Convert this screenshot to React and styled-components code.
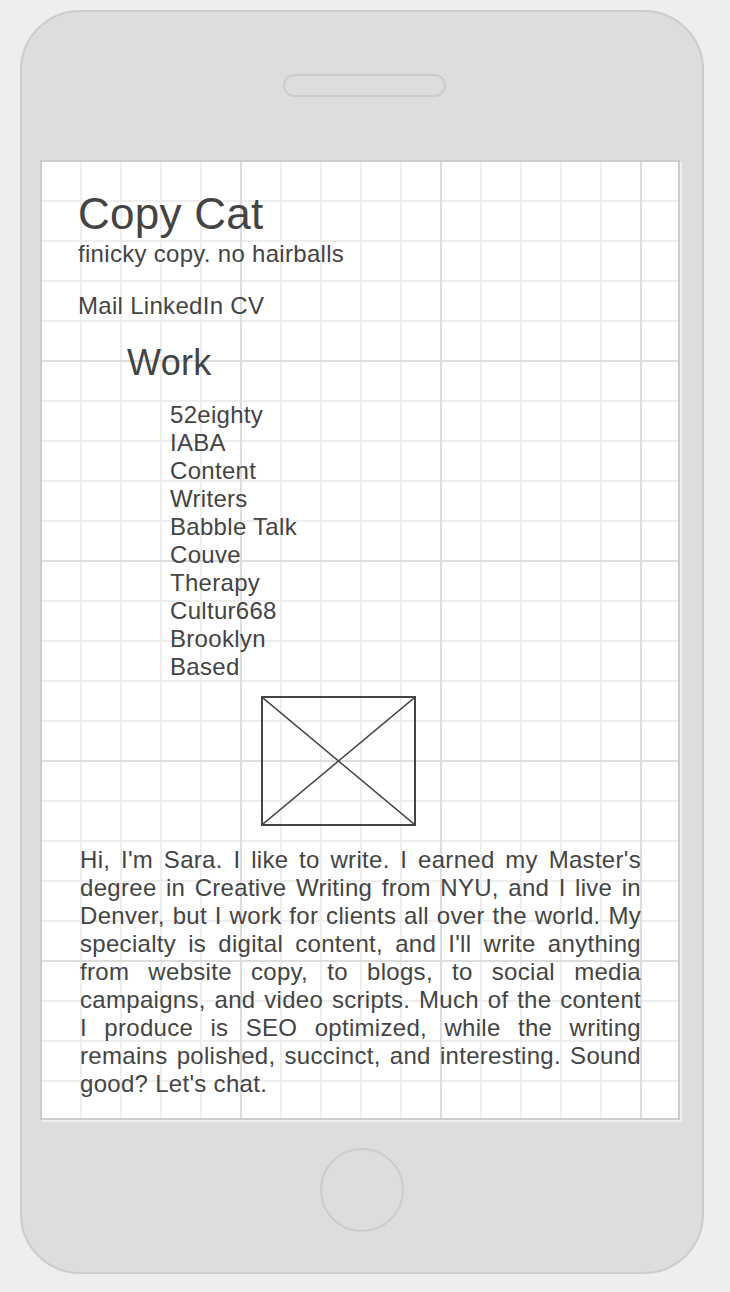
import React from 'react';
import styled, { createGlobalStyle } from 'styled-components';

const Global = createGlobalStyle`
  html, body { margin: 0; padding: 0; background: #eeeeee; }
  body { font-family: "Liberation Sans", Arial, Helvetica, sans-serif; color: #444444; }
`;

const Page = styled.div`
  width: 730px;
  height: 1292px;
  box-sizing: border-box;
  padding: 10px 0 0 20px;
`;

const Phone = styled.div`
  width: 684px;
  height: 1264px;
  box-sizing: border-box;
  border: 2px solid #cccccc;
  border-radius: 60px;
  background: #dddddd;
  display: flex;
  flex-direction: column;
  align-items: flex-start;
  padding: 62px 0 0 18px;
`;

const Speaker = styled.div`
  width: 163px;
  height: 23px;
  box-sizing: border-box;
  border: 2px solid #cccccc;
  border-radius: 12px;
  margin: 0 0 63px 243px;
`;

const Screen = styled.div`
  width: 640px;
  height: 960px;
  box-sizing: border-box;
  border: 2px solid #cccccc;
  background-color: #ffffff;
  background-image:
    linear-gradient(to right, #dddddd 2px, transparent 2px),
    linear-gradient(to bottom, #dddddd 2px, transparent 2px),
    linear-gradient(to right, #eeeeee 2px, transparent 2px),
    linear-gradient(to bottom, #eeeeee 2px, transparent 2px);
  background-size: 200px 200px, 200px 200px, 40px 40px, 40px 40px;
  background-origin: border-box;
  box-shadow: 2px 2px 0 #efefef;
  padding: 25px 36px 0 36px;
  display: flex;
  flex-direction: column;
  align-items: flex-start;
  letter-spacing: 0.3px;
`;

const Title = styled.h1`
  margin: 0;
  font-size: 44px;
  line-height: 53px;
  font-weight: 400;
  letter-spacing: 0.25px;
`;

const Tagline = styled.div`
  font-size: 24px;
  line-height: 28px;
`;

const Links = styled.nav`
  margin-top: 24px;
  font-size: 24px;
  line-height: 28px;
  display: flex;
`;

const LinkItem = styled.a`
  color: inherit;
  text-decoration: none;
  white-space: pre;
`;

const SectionTitle = styled.h2`
  margin: 23px 0 0 49px;
  font-size: 36px;
  line-height: 40px;
  font-weight: 400;
`;

const WorkList = styled.ul`
  margin: 18px 0 0 92px;
  padding: 0;
  list-style: none;
  width: 140px;
`;

const WorkItem = styled.li`
  font-size: 24px;
  line-height: 28px;
`;

const ImageBox = styled.div`
  margin: 15px 0 0 183px;
  width: 155px;
  height: 130px;
  box-sizing: border-box;
  border: 2px solid #444444;
  display: flex;
  svg { display: block; width: 100%; height: 100%; }
`;

const Bio = styled.p`
  margin: 20px 1px 0 2px;
  align-self: stretch;
  font-size: 24px;
  line-height: 28px;
  text-align: justify;
`;

const HomeButton = styled.div`
  width: 84px;
  height: 84px;
  box-sizing: border-box;
  border: 2px solid #cccccc;
  border-radius: 50%;
  margin: 28px 0 0 280px;
`;

const work = ['52eighty', 'IABA', 'Content Writers', 'Babble Talk', 'Couve Therapy', 'Cultur668', 'Brooklyn Based'];

export default function App() {
  return (
    <>
      <Global />
      <Page>
        <Phone>
          <Speaker />
          <Screen>
            <Title>Copy Cat</Title>
            <Tagline>finicky copy. no hairballs</Tagline>
            <Links>
              <LinkItem href="#">Mail</LinkItem>
              <LinkItem href="#"> LinkedIn</LinkItem>
              <LinkItem href="#"> CV</LinkItem>
            </Links>
            <SectionTitle>Work</SectionTitle>
            <WorkList>
              {work.map((w) => (
                <WorkItem key={w}>{w}</WorkItem>
              ))}
            </WorkList>
            <ImageBox>
              <svg viewBox="0 0 151 126" preserveAspectRatio="none">
                <line x1="0" y1="0" x2="151" y2="126" stroke="#444444" strokeWidth="1.5" />
                <line x1="151" y1="0" x2="0" y2="126" stroke="#444444" strokeWidth="1.5" />
              </svg>
            </ImageBox>
            <Bio>
              Hi, I'm Sara. I like to write. I earned my Master's degree in Creative Writing from NYU, and I live in Denver, but I work for clients all over the world. My specialty is digital content, and I'll write anything from website copy, to blogs, to social media campaigns, and video scripts. Much of the content I produce is SEO optimized, while the writing remains polished, succinct, and interesting. Sound good? Let's chat.
            </Bio>
          </Screen>
          <HomeButton />
        </Phone>
      </Page>
    </>
  );
}
